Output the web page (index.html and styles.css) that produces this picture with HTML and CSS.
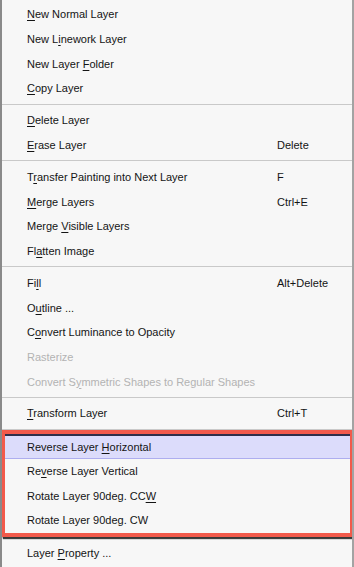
FILE: index.html
```html
<!DOCTYPE html>
<html>
<head>
<meta charset="utf-8">
<link rel="stylesheet" href="styles.css">
</head>
<body>
<div class="menu">
  <div class="item"><span class="label"><u>N</u>ew Normal Layer</span></div>
  <div class="item"><span class="label">New L<u>i</u>nework Layer</span></div>
  <div class="item"><span class="label">New Layer <u>F</u>older</span></div>
  <div class="item"><span class="label"><u>C</u>opy Layer</span></div>
  <div class="sep"></div>
  <div class="item"><span class="label"><u>D</u>elete Layer</span></div>
  <div class="item"><span class="label"><u>E</u>rase Layer</span><span class="key">Delete</span></div>
  <div class="sep"></div>
  <div class="item"><span class="label">T<u>r</u>ansfer Painting into Next Layer</span><span class="key">F</span></div>
  <div class="item"><span class="label"><u>M</u>erge Layers</span><span class="key">Ctrl+E</span></div>
  <div class="item"><span class="label">Merge <u>V</u>isible Layers</span></div>
  <div class="item"><span class="label">Fl<u>a</u>tten Image</span></div>
  <div class="sep"></div>
  <div class="item"><span class="label">Fi<u>l</u>l</span><span class="key">Alt+Delete</span></div>
  <div class="item"><span class="label">O<u>u</u>tline ...</span></div>
  <div class="item"><span class="label">C<u>o</u>nvert Luminance to Opacity</span></div>
  <div class="item disabled"><span class="label">Rasterize</span></div>
  <div class="item disabled"><span class="label">Convert S<u>y</u>mmetric Shapes to Regular Shapes</span></div>
  <div class="sep"></div>
  <div class="item"><span class="label"><u>T</u>ransform Layer</span><span class="key">Ctrl+T</span></div>
  <div class="sep"></div>
  <div class="group">
    <div class="item active"><span class="label">Reverse Layer <u>H</u>orizontal</span></div>
    <div class="item"><span class="label">Re<u>v</u>erse Layer Vertical</span></div>
    <div class="item"><span class="label">Rotate Layer 90deg. CC<u>W</u></span></div>
    <div class="item"><span class="label">Rotate Layer 90deg. CW</span></div>
  </div>
  <div class="sep"></div>
  <div class="item"><span class="label">Layer <u>P</u>roperty ...</span></div>
</div>
</body>
</html>
```
FILE: styles.css
```css
html, body {
  margin: 0;
  padding: 0;
  background: #f7f7f7;
}
.menu {
  width: 354px;
  height: 567px;
  box-sizing: border-box;
  border-left: 2px solid #8a8a8a;
  border-right: 2px solid #a3a3a3;
  background: #f7f7f7;
  padding-top: 2px;
  font-family: "Liberation Sans", Arial, sans-serif;
  font-size: 11px;
  color: #141414;
  overflow: hidden;
}
.item {
  height: 24.67px;
  box-sizing: border-box;
  display: flex;
  align-items: center;
  padding-left: 25px;
  white-space: nowrap;
}
.label {
  width: 250px;
  flex: none;
}
.key {
  flex: none;
}
u {
  text-decoration: underline;
  text-underline-offset: 2px;
}
.disabled {
  color: #b3b3b3;
}
.sep {
  height: 7.33px;
  display: flex;
  align-items: center;
}
.sep::before {
  content: "";
  flex: 1;
  height: 1px;
  background: #c9c9c9;
}
.group {
  position: relative;
  padding-top: 1px;
  padding-bottom: 1px;
}
.group::after {
  content: "";
  position: absolute;
  left: -1px;
  right: -2px;
  top: -3px;
  bottom: -3px;
  border: 4px solid #f25a4b;
  box-shadow: 2px 2px 1px rgba(30, 30, 30, 0.85);
  pointer-events: none;
}
.active {
  background: #dcdcfb;
  border-top: 2px solid #2f2f4a;
  border-bottom: 1px solid #aeaeef;
}
```
